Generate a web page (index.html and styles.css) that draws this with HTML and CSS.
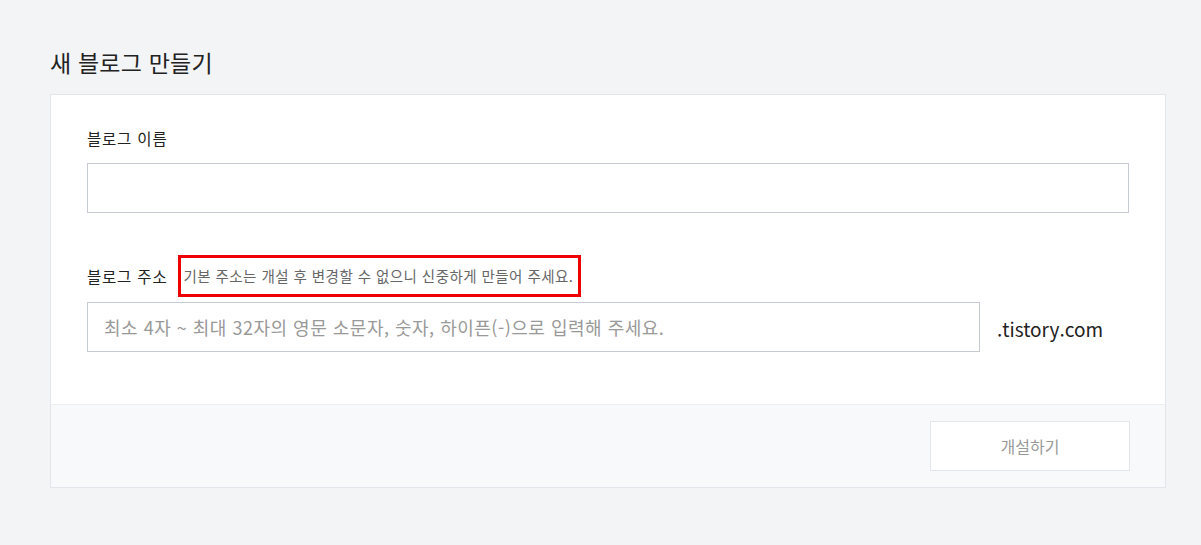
FILE: index.html
```html
<!DOCTYPE html>
<html lang="ko">
<head>
  <meta charset="UTF-8" />
  <title>새 블로그 만들기</title>
  <meta name="viewport" content="width=device-width, initial-scale=1.0" />
  <link rel="stylesheet" href="styles.css">
</head>
<body>
  <div class="wrap">
    <h1 class="title">새 블로그 만들기</h1>
    <form class="card" id="createForm">
      <div class="card-body">
        <div class="field">
          <label class="label" for="blogName">블로그 이름</label>
          <input class="input" type="text" id="blogName" name="name" />
        </div>
        <div class="field field-addr">
          <div class="label-row">
            <label class="label" for="blogAddr">블로그 주소</label>
            <span class="hint">기본 주소는 개설 후 변경할 수 없으니 신중하게 만들어 주세요.</span>
          </div>
          <div class="addr-row">
            <input class="input input-addr" type="text" id="blogAddr" name="addr" placeholder="최소 4자 ~ 최대 32자의 영문 소문자, 숫자, 하이픈(-)으로 입력해 주세요." />
            <span class="domain">.tistory.com</span>
          </div>
        </div>
      </div>
      <div class="card-foot">
        <button type="submit" class="btn" disabled>개설하기</button>
      </div>
    </form>
  </div>
</body>
</html>
```

FILE: styles.css
```css
* {
  box-sizing: border-box;
}
body {
  margin: 0;
  font-family: 'Noto Sans CJK KR', 'Noto Sans', sans-serif;
  background-color: #f3f4f6;
  color: #222;
}
.wrap {
  padding: 44px 35px 40px 50px;
}
.title {
  margin: 0 0 14px;
  font-size: 23px;
  font-weight: 400;
  line-height: 36px;
  color: #222;
  letter-spacing: 0.2px;
}
.card {
  background: #fff;
  border: 1px solid #e3e5ec;
}
.card-body {
  padding: 32px 36px 52px;
}
.label {
  display: block;
  font-size: 15.5px;
  line-height: 22px;
  color: #222;
  letter-spacing: 0.8px;
}
.field .label {
  margin-bottom: 14px;
}
.field-addr {
  margin-top: 42px;
}
.label-row {
  display: flex;
  align-items: center;
  gap: 11px;
  margin-bottom: 5px;
}
.label-row .label {
  margin-bottom: 0;
}
.hint {
  border: 3px solid #ee0000;
  padding: 7px 5px 7px 2px;
  font-size: 14.5px;
  line-height: 22px;
  color: #666;
  letter-spacing: 0.45px;
}
.input {
  display: block;
  width: 100%;
  height: 50px;
  padding: 0 16px;
  border: 1px solid #c6cad1;
  border-radius: 0;
  font-family: inherit;
  font-size: 18px;
  letter-spacing: 0.5px;
  color: #222;
  outline: none;
}
.input::placeholder {
  color: #999;
}
.addr-row {
  display: flex;
  align-items: center;
}
.input-addr {
  width: 893px;
  flex: none;
}
.domain {
  margin-left: 17px;
  margin-top: 2px;
  font-size: 19px;
  color: #222;
}
.card-foot {
  display: flex;
  justify-content: flex-end;
  padding: 16px 35px 16px;
  background: #f8f9fb;
  border-top: 1px solid #eceef3;
}
.btn {
  width: 200px;
  height: 50px;
  background: #fff;
  border: 1px solid #e3e5ec;
  font-family: inherit;
  font-size: 16px;
  color: #999;
}
```
